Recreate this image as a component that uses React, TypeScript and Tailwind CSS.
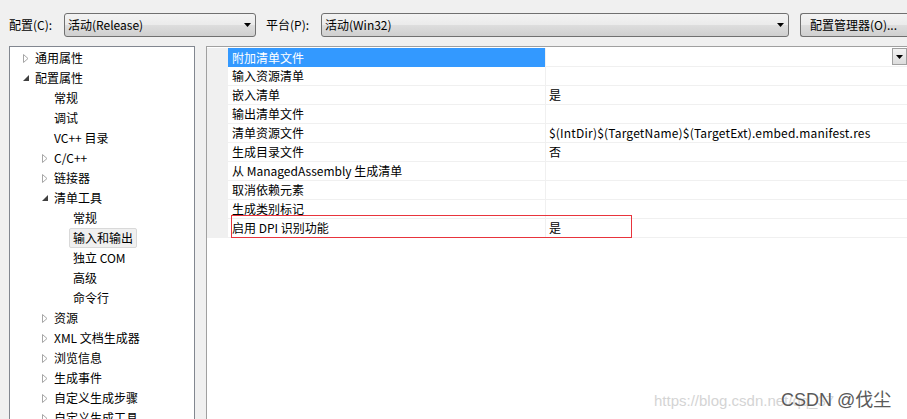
import React from "react";

type TreeItem = { label: string; level: number; expander?: "closed" | "open"; selected?: boolean };

const tree: TreeItem[] = [
  { label: "通用属性", level: 0, expander: "closed" },
  { label: "配置属性", level: 0, expander: "open" },
  { label: "常规", level: 1 },
  { label: "调试", level: 1 },
  { label: "VC++ 目录", level: 1 },
  { label: "C/C++", level: 1, expander: "closed" },
  { label: "链接器", level: 1, expander: "closed" },
  { label: "清单工具", level: 1, expander: "open" },
  { label: "常规", level: 2 },
  { label: "输入和输出", level: 2, selected: true },
  { label: "独立 COM", level: 2 },
  { label: "高级", level: 2 },
  { label: "命令行", level: 2 },
  { label: "资源", level: 1, expander: "closed" },
  { label: "XML 文档生成器", level: 1, expander: "closed" },
  { label: "浏览信息", level: 1, expander: "closed" },
  { label: "生成事件", level: 1, expander: "closed" },
  { label: "自定义生成步骤", level: 1, expander: "closed" },
  { label: "自定义生成工具", level: 1, expander: "closed" },
];

const props: [string, string][] = [
  ["附加清单文件", ""],
  ["输入资源清单", ""],
  ["嵌入清单", "是"],
  ["输出清单文件", ""],
  ["清单资源文件", "$(IntDir)$(TargetName)$(TargetExt).embed.manifest.res"],
  ["生成目录文件", "否"],
  ["从 ManagedAssembly 生成清单", ""],
  ["取消依赖元素", ""],
  ["生成类别标记", ""],
  ["启用 DPI 识别功能", "是"],
];

function Arrow() {
  return (
    <svg width="7" height="4" viewBox="0 0 7 4" className="shrink-0">
      <path d="M0 0h7L3.5 4z" fill="#000" />
    </svg>
  );
}

function Combo({ text, className }: { text: string; className: string }) {
  return (
    <div
      className={`h-6 flex items-center justify-between pl-[3px] pr-[4px] border border-[#707070] rounded-[3px] bg-[linear-gradient(#f3f3f3_0%,#ebebeb_48%,#dddddd_52%,#cfcfcf_100%)] ${className}`}
    >
      <span>{text}</span>
      <Arrow />
    </div>
  );
}

function Expander({ kind }: { kind?: "closed" | "open" }) {
  if (kind === "closed")
    return (
      <svg width="6" height="9" viewBox="0 0 6 9">
        <path d="M0.5 0.5L5 4.5L0.5 8.5z" fill="none" stroke="#a6a6a6" />
      </svg>
    );
  if (kind === "open")
    return (
      <svg width="6" height="6" viewBox="0 0 6 6">
        <path d="M6 0V6H0z" fill="#404040" />
      </svg>
    );
  return null;
}

export default function App() {
  return (
    <div className="relative w-[907px] h-[419px] overflow-hidden bg-[#f0f0f0] text-[12px] text-black font-['Segoe_UI','Noto_Sans_CJK_SC',sans-serif]">
      <div className="flex items-center h-6 mt-[13px] pl-[9px]">
        <span className="w-[55px]">配置(C):</span>
        <Combo text="活动(Release)" className="w-[192px]" />
        <span className="ml-[10px] w-[55px]">平台(P):</span>
        <Combo text="活动(Win32)" className="w-[468px]" />
        <div className="ml-[11px] h-6 flex-1 flex items-center pl-[9px] border border-r-0 border-[#707070] rounded-l-[3px] bg-[linear-gradient(#f3f3f3_0%,#ebebeb_48%,#dddddd_52%,#cfcfcf_100%)]">
          配置管理器(O)...
        </div>
      </div>

      <div className="flex mt-[9px] pl-[9px] h-[380px]">
        <div className="w-[186px] shrink-0 border border-[#828790] bg-white pt-px">
          {tree.map((t, i) => (
            <div key={i} className="h-5 flex items-center" style={{ paddingLeft: 13 + t.level * 19 }}>
              <span className="w-3 flex items-center justify-start">
                <Expander kind={t.expander} />
              </span>
              <span
                className={
                  t.selected
                    ? "ml-[-4px] px-[3px] h-5 flex items-center border border-[#d9d9d9] rounded-[2px] bg-[#f0f0f0]"
                    : ""
                }
              >
                {t.label}
              </span>
            </div>
          ))}
        </div>

        <div className="ml-[11px] flex-1 border-l border-t border-[#a0a0a0] bg-white pt-px">
          {props.map(([k, v], i) => (
            <div key={i} className="flex h-[19px]">
              <div className="w-[21px] bg-[#f0f0f0]" />
              <div
                className={`w-[318px] pl-[4px] flex items-center border-r border-[#f0f0f0] ${
                  i === 0 ? "bg-[#3399ff] text-white" : "border-b"
                }`}
              >
                {k}
              </div>
              <div className="flex-1 pl-[3px] flex items-center justify-between border-b border-[#f0f0f0] tracking-[0.2px]">
                <span>{v}</span>
                {i === 0 && (
                  <div className="w-[15px] h-[17px] mb-[1px] flex items-center justify-center border border-[#a0a0a0] bg-[linear-gradient(#f3f3f3,#dcdcdc)]">
                    <Arrow />
                  </div>
                )}
              </div>
            </div>
          ))}
        </div>
      </div>

      <div className="absolute left-[231px] top-[215px] w-[401px] h-[23px] text-[#e8343c] shadow-[inset_0_0_0_1px_#e8343c]" />

      <div className="absolute left-[654px] top-[390px] flex items-center">
        <span className="text-[15px] text-[#d4d4d4] font-['Liberation_Sans',sans-serif]">https://blog.csdn.net/qq_37</span>
      </div>
      <div className="absolute left-[781px] top-[387px] text-[18px] text-[#5a5a5a] font-['Liberation_Sans','Noto_Sans_CJK_SC',sans-serif] [text-shadow:0_0_2px_#fff]">
        CSDN @伐尘
      </div>
    </div>
  );
}
